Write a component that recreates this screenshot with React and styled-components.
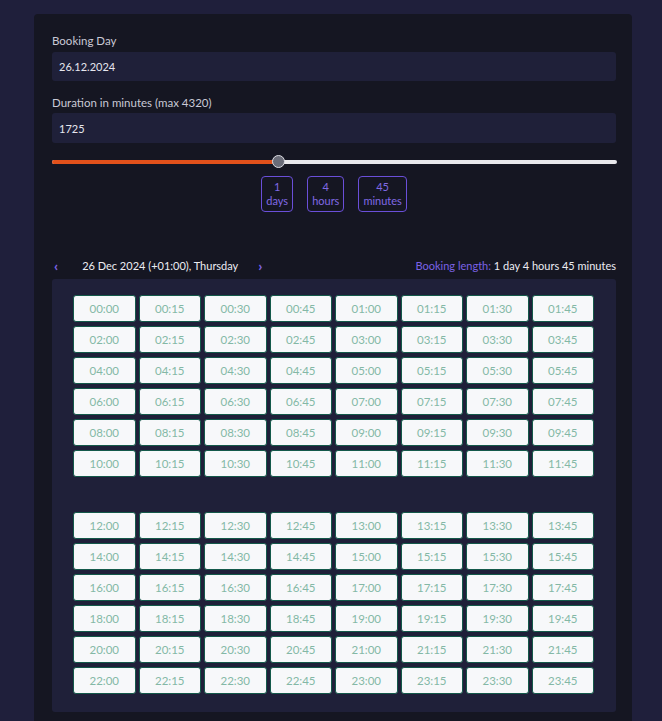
import React, { useState } from "react";
import styled, { createGlobalStyle } from "styled-components";

const GlobalStyle = createGlobalStyle`
  html, body {
    margin: 0;
    padding: 0;
    background: #1f1f3b;
    font-family: Lato, "Open Sans", sans-serif;
  }
`;

// Outer page
const Page = styled.div`
  min-height: 721px;
  padding: 14px 30px 0 34px;
  box-sizing: border-box;
`;

const Card = styled.div`
  width: 598px;
  background: #151622;
  border-radius: 4px 4px 0 0;
  padding: 20px 16px 12px 18px;
  box-sizing: border-box;
  min-height: 707px;
`;

const Label = styled.div`
  font-size: 11.5px;
  line-height: 14px;
  color: #c9c9d6;
  margin-bottom: ${(p) => p.gap || 4}px;
`;

const Field = styled.div`
  height: ${(p) => p.h || 29}px;
  background: #1f2039;
  border-radius: 3px;
  color: #e6e6ee;
  font-size: 11px;
  display: flex;
  align-items: center;
  padding-left: 7px;
  margin-bottom: ${(p) => p.mb || 0}px;
`;

const SliderWrap = styled.div`
  position: relative;
  height: 14px;
  margin: 12px 0 7px;
  width: 565px;
`;

const Track = styled.div`
  position: absolute;
  left: 0;
  right: 0;
  top: 5px;
  height: 4px;
  border-radius: 2px;
  background: #e8e8ec;
`;

const Fill = styled.div`
  position: absolute;
  left: 0;
  top: 5px;
  height: 4px;
  border-radius: 2px;
  background: #e2511b;
`;

const Thumb = styled.div`
  position: absolute;
  top: 0;
  width: 11px;
  height: 11px;
  margin-left: -6px;
  border-radius: 50%;
  background: #6a6c78;
  border: 1.5px solid #dedee4;
`;

const Parts = styled.div`
  display: flex;
  justify-content: center;
  gap: 14px;
`;

const Part = styled.div`
  border: 1px solid #6a4fd9;
  border-radius: 4px;
  height: 36px;
  min-width: 32px;
  padding: 0 4px;
  box-sizing: border-box;
  display: flex;
  flex-direction: column;
  align-items: center;
  justify-content: center;
  color: #8069e4;
  font-size: 11px;
  line-height: 14px;
`;

const NavRow = styled.div`
  display: flex;
  align-items: center;
  justify-content: space-between;
  margin-top: 46px;
  height: 14px;
  margin-bottom: 7px;
  font-size: 11px;
  color: #ececf2;
`;

const NavLeft = styled.div`
  display: flex;
  align-items: center;
`;

const Arrow = styled.span`
  color: #7b62e6;
  font-weight: 900;
  font-size: 14px;
  padding: 0 ${(p) => p.pr || 0}px 0 ${(p) => p.pl || 0}px;
`;

const Accent = styled.span`
  color: #7b62e6;
`;

const Panel = styled.div`
  width: 564px;
  background: #1f2039;
  border-radius: 3px;
  padding: 16px 0 18px 21px;
  box-sizing: border-box;
`;

const Grid = styled.div`
  display: grid;
  grid-template-columns: repeat(8, 62.5px);
  grid-auto-rows: 27px;
  column-gap: 3px;
  row-gap: 4px;
  & + & {
    margin-top: 35px;
  }
`;

const Slot = styled.button`
  all: unset;
  box-sizing: border-box;
  background: #f7f8fa;
  border: 1px solid #14594a;
  border-radius: 3px;
  color: #84b8a6;
  font-family: Lato, "Open Sans", sans-serif;
  font-size: 11.5px;
  display: flex;
  align-items: center;
  justify-content: center;
  cursor: pointer;
`;

const pad = (n) => String(n).padStart(2, "0");
const slots = (from, to) => {
  const out = [];
  for (let h = from; h < to; h++)
    for (let m = 0; m < 60; m += 15) out.push(`${pad(h)}:${pad(m)}`);
  return out;
};

export default function App() {
  const [minutes] = useState(1725);
  const pct = (minutes / 4320) * 100;

  return (
    <>
      <GlobalStyle />
      <Page>
        <Card>
          <Label>Booking Day</Label>
          <Field mb={15}>26.12.2024</Field>
          <Label gap={3}>Duration in minutes (max 4320)</Label>
          <Field h={30}>1725</Field>

          <SliderWrap>
            <Track />
            <Fill style={{ width: `${pct}%` }} />
            <Thumb style={{ left: `${pct}%` }} />
          </SliderWrap>

          <Parts>
            <Part>
              <span>1</span>
              <span>days</span>
            </Part>
            <Part>
              <span>4</span>
              <span>hours</span>
            </Part>
            <Part>
              <span>45</span>
              <span>minutes</span>
            </Part>
          </Parts>

          <NavRow>
            <NavLeft>
              <Arrow pl={2} pr={24}>‹</Arrow>
              <span>26 Dec 2024 (+01:00), Thursday</span>
              <Arrow pl={20}>›</Arrow>
            </NavLeft>
            <span>
              <Accent>Booking length:</Accent> 1 day 4 hours 45 minutes
            </span>
          </NavRow>

          <Panel>
            <Grid>
              {slots(0, 12).map((t) => (
                <Slot key={t}>{t}</Slot>
              ))}
            </Grid>
            <Grid>
              {slots(12, 24).map((t) => (
                <Slot key={t}>{t}</Slot>
              ))}
            </Grid>
          </Panel>
        </Card>
      </Page>
    </>
  );
}
